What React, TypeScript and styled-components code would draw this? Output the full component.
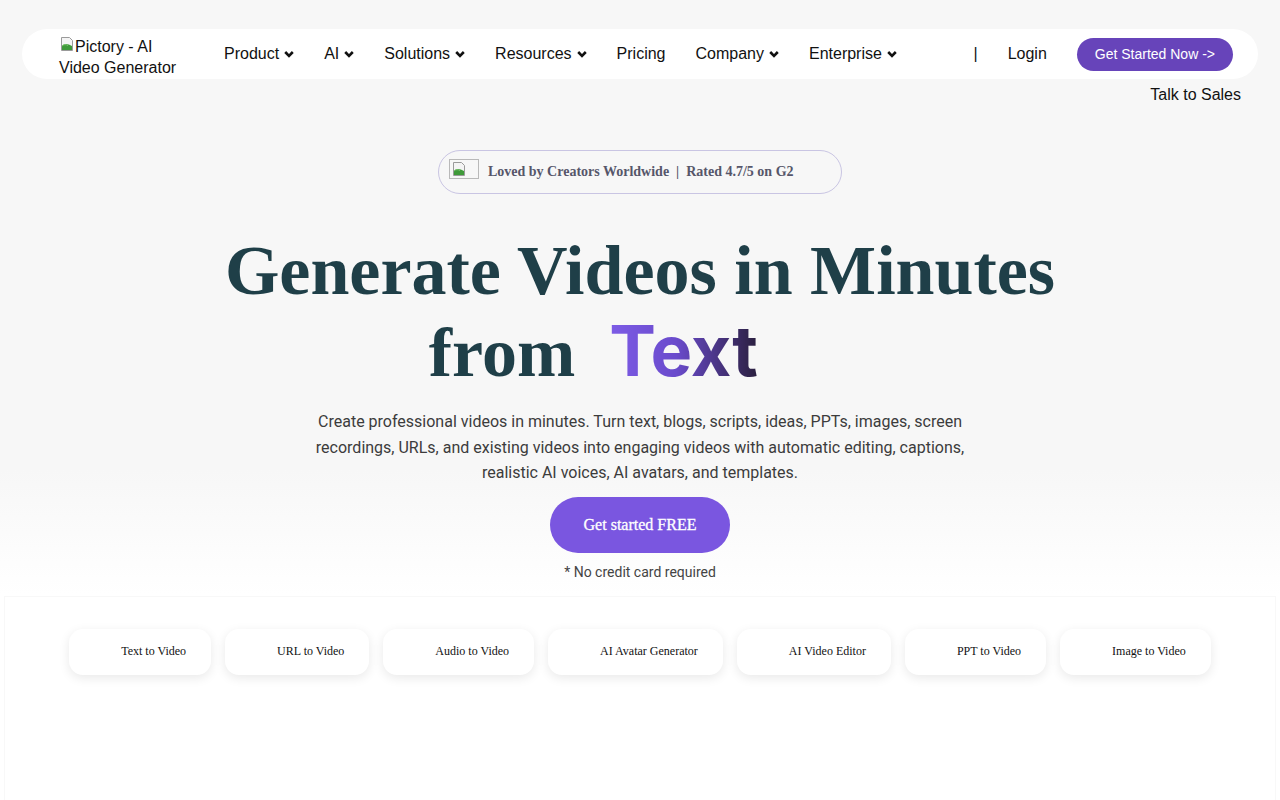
import React from 'react'
import styled, { createGlobalStyle } from 'styled-components'

const GlobalStyle = createGlobalStyle`
  html, body {
    margin: 0;
    padding: 0;
    background: #ffffff;
    font-family: 'Liberation Sans', Arial, sans-serif;
  }
`

const Page = styled.div`
  min-height: 800px;
  background: #ffffff;
`

const Hero = styled.div`
  padding-top: 29px;
  padding-bottom: 14px;
  background: linear-gradient(to bottom, #f7f7f7 0, #f7f7f7 470px, #ffffff 595px);
`

const NavBar = styled.nav`
  display: flex;
  align-items: center;
  height: 50px;
  margin: 0 22px;
  padding: 0 25px 0 37px;
  background: #ffffff;
  border-radius: 25px;
`

const Logo = styled.div`
  width: 125px;
  padding-top: 5px;
  font-size: 16px;
  line-height: 21px;
  color: #111;
`

const NavLinks = styled.ul`
  display: flex;
  align-items: center;
  gap: 30px;
  margin: 0 0 0 40px;
  padding: 0;
  list-style: none;
`

const NavItem = styled.li`
  display: flex;
  align-items: center;
  gap: 5px;
  font-size: 16px;
  color: #111;
  cursor: pointer;
`

const RightGroup = styled.div`
  display: flex;
  align-items: center;
  gap: 30px;
  margin-left: auto;
  font-size: 16px;
  color: #111;
`

const StartNow = styled.button`
  height: 33px;
  padding: 0 18px;
  border: none;
  border-radius: 17px;
  background: #6744ba;
  color: #fff;
  font-family: 'Liberation Sans', Arial, sans-serif;
  font-size: 14px;
`

const TalkRow = styled.div`
  display: flex;
  justify-content: flex-end;
  padding: 7px 39px 0 0;
  font-size: 16px;
  line-height: 18px;
  color: #111;
`

const Center = styled.div`
  display: flex;
  flex-direction: column;
  align-items: center;
`

const Badge = styled.div`
  display: flex;
  align-items: center;
  gap: 9px;
  box-sizing: border-box;
  width: 404px;
  height: 44px;
  margin-top: 46px;
  padding: 0 10px;
  border: 1px solid #c9c5e3;
  border-radius: 22px;
  font-family: 'Liberation Serif', 'Times New Roman', serif;
  font-weight: 700;
  font-size: 14px;
  color: #56566a;
  white-space: pre;
`

const BrokenFrame = styled.span`
  display: inline-flex;
  box-sizing: border-box;
  width: 30px;
  height: 20px;
  margin-top: -6px;
  padding: 1px;
  border: 1px solid #b9b9b9;
`

const Heading = styled.h1`
  margin: 37px 0 0;
  font-family: 'Liberation Serif', 'Times New Roman', serif;
  font-weight: 700;
  font-size: 70px;
  line-height: 80px;
  color: #1f3f48;
  text-align: center;
`

const TypedWord = styled.span`
  display: inline-block;
  width: 242px;
  margin-left: 34px;
  font-family: Inter, 'Liberation Sans', sans-serif;
  text-align: left;

  span {
    background: linear-gradient(90deg, #7d5ce6 0%, #6a4bcc 45%, #2a1f3e 100%);
    -webkit-background-clip: text;
    background-clip: text;
    color: transparent;
  }
`

const Lead = styled.p`
  max-width: 680px;
  margin: 16px 0 0;
  font-family: Roboto, 'Liberation Sans', sans-serif;
  font-size: 16px;
  line-height: 25.5px;
  color: #3c3c3c;
  text-align: center;
`

const FreeButton = styled.button`
  width: 180px;
  height: 56px;
  margin-top: 11px;
  border: none;
  border-radius: 28px;
  background: #7a56e0;
  color: #fff;
  font-family: 'Liberation Serif', 'Times New Roman', serif;
  font-size: 16px;
  -webkit-text-stroke: 0.3px #fff;
`

const Note = styled.div`
  margin-top: 9px;
  font-family: Roboto, 'Liberation Sans', sans-serif;
  font-size: 14px;
  line-height: 20px;
  color: #444;
`

const Features = styled.section`
  display: flex;
  justify-content: center;
  gap: 14px;
  min-height: 210px;
  margin: 0 4px;
  padding-top: 32px;
  border: 1px solid #f8f8f8;
  border-bottom: none;
  background: #fff;
`

const FeatureCard = styled.div`
  display: flex;
  align-items: center;
  height: 46px;
  padding: 0 25px 0 52px;
  border-radius: 14px;
  background: #fff;
  box-shadow: 0 3px 11px rgba(0, 0, 0, 0.09);
  font-family: 'Liberation Serif', 'Times New Roman', serif;
  font-size: 12px;
  color: #111;
`

const Chevron = () => (
  <svg width="10" height="8" viewBox="0 0 10 8">
    <polyline points="1.2,2 5,5.8 8.8,2" fill="none" stroke="#111" strokeWidth="2.6" />
  </svg>
)

const BrokenImage = () => (
  <svg width="16" height="16" viewBox="0 0 16 16">
    <path d="M2.5 1.5h8l3 3v10h-11z" fill="#f4f4f4" stroke="#9a9a9a" />
    <path d="M3 14V10c3-3 6-2 10 0v4z" fill="#3f9a3a" />
    <path d="M3 10c2-2 4-1.5 6-.5" fill="none" stroke="#7cc46f" />
  </svg>
)

const navItems = [
  { label: 'Product', menu: true },
  { label: 'AI', menu: true },
  { label: 'Solutions', menu: true },
  { label: 'Resources', menu: true },
  { label: 'Pricing', menu: false },
  { label: 'Company', menu: true },
  { label: 'Enterprise', menu: true },
]

const features = [
  'Text to Video',
  'URL to Video',
  'Audio to Video',
  'AI Avatar Generator',
  'AI Video Editor',
  'PPT to Video',
  'Image to Video',
]

const App = () => {
  return (
    <Page>
      <GlobalStyle />
      <Hero>
        <NavBar>
          <Logo>
            <BrokenImage />
            Pictory - AI Video Generator
          </Logo>
          <NavLinks>
            {navItems.map((item) => (
              <NavItem key={item.label}>
                {item.label}
                {item.menu && <Chevron />}
              </NavItem>
            ))}
          </NavLinks>
          <RightGroup>
            <span>|</span>
            <span>Login</span>
            <StartNow>Get Started Now -&gt;</StartNow>
          </RightGroup>
        </NavBar>
        <TalkRow>Talk to Sales</TalkRow>

        <Center>
          <Badge>
            <BrokenFrame>
              <BrokenImage />
            </BrokenFrame>
            Loved by Creators Worldwide  |  Rated 4.7/5 on G2
          </Badge>
          <Heading>
            Generate Videos in Minutes
            <br />
            from
            <TypedWord>
              <span>Text</span>
            </TypedWord>
          </Heading>
          <Lead>
            Create professional videos in minutes. Turn text, blogs, scripts, ideas, PPTs, images, screen
            recordings, URLs, and existing videos into engaging videos with automatic editing, captions,
            realistic AI voices, AI avatars, and templates.
          </Lead>
          <FreeButton>Get started FREE</FreeButton>
          <Note>* No credit card required</Note>
        </Center>
      </Hero>

      <Features>
        {features.map((f) => (
          <FeatureCard key={f}>{f}</FeatureCard>
        ))}
      </Features>
    </Page>
  )
}

export default App
